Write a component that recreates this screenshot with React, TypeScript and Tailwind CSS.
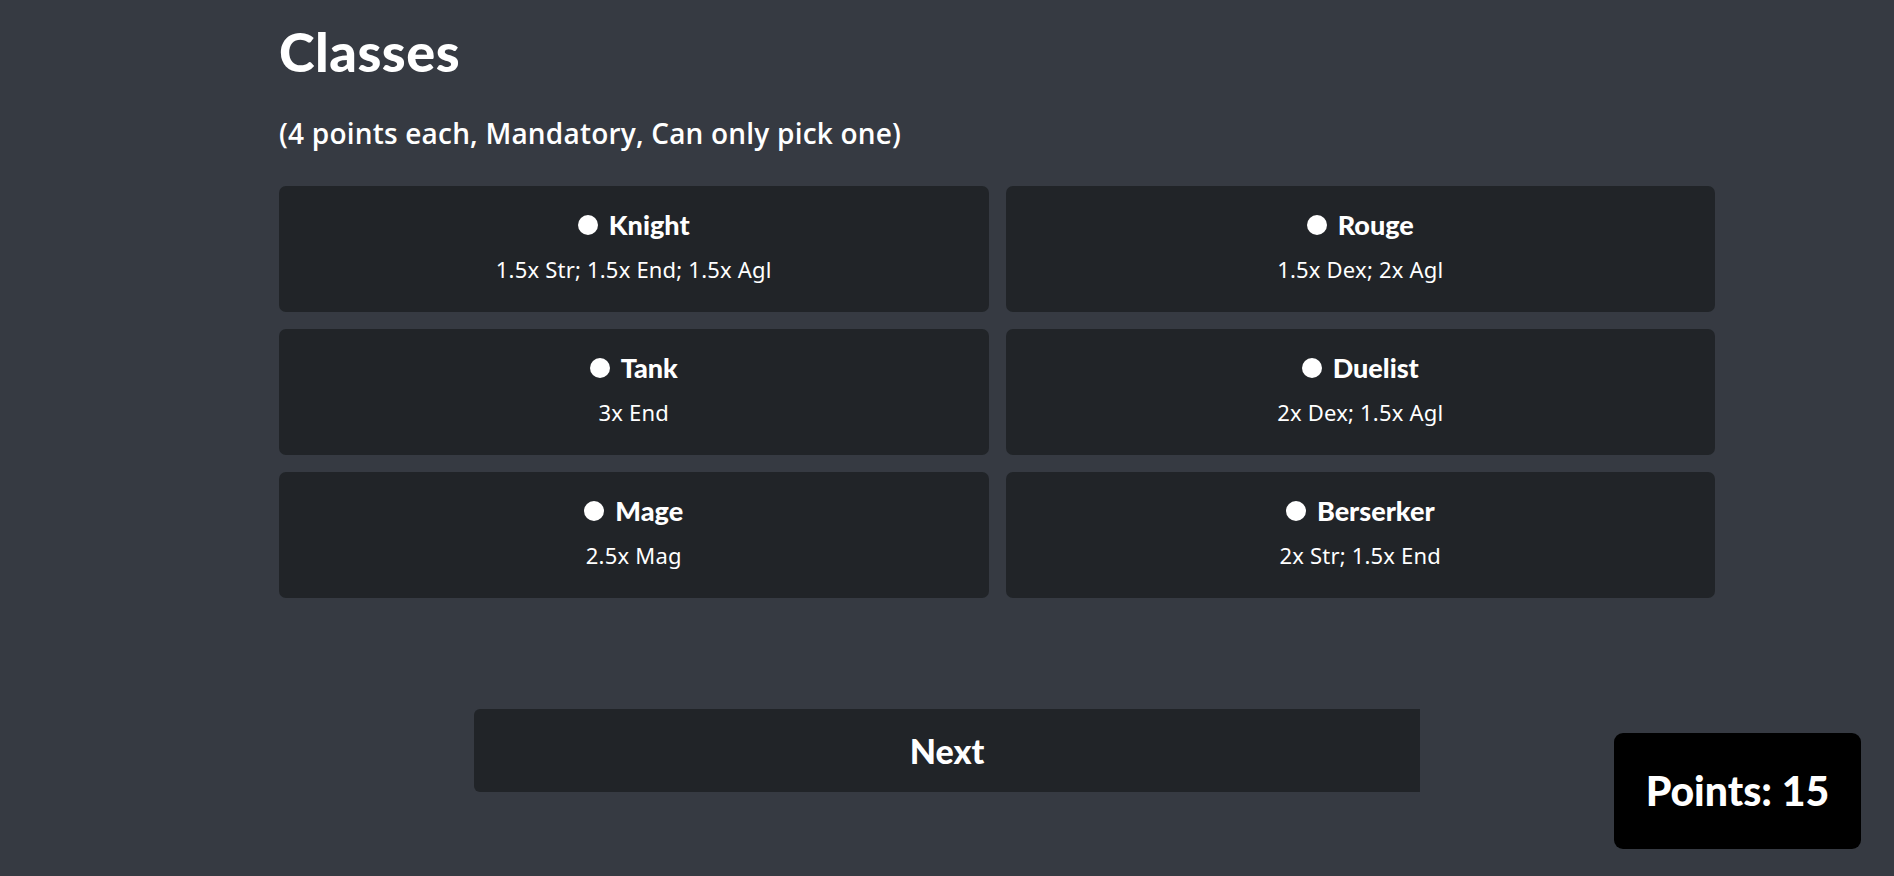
import React from "react";

const classes = [
  { name: "Knight", desc: "1.5x Str; 1.5x End; 1.5x Agl" },
  { name: "Rouge", desc: "1.5x Dex; 2x Agl" },
  { name: "Tank", desc: "3x End" },
  { name: "Duelist", desc: "2x Dex; 1.5x Agl" },
  { name: "Mage", desc: "2.5x Mag" },
  { name: "Berserker", desc: "2x Str; 1.5x End" },
];

export default function App() {
  return (
    <div className="min-h-[876px] w-full bg-[#363a42] text-white relative overflow-hidden" style={{ fontFamily: "'Noto Sans', sans-serif" }}>
      <div className="ml-[279px] w-[1436px] pt-[22px]">
        <h1 className="text-[54px] leading-[60px] font-black tracking-[0.5px]" style={{ fontFamily: "Lato, sans-serif" }}>Classes</h1>
        <p className="mt-[32px] text-[28px] leading-[38px] font-semibold tracking-[0.2px]" style={{ fontFamily: "'Open Sans', sans-serif" }}>
          (4 points each, Mandatory, Can only pick one)
        </p>
        <div className="mt-[34px] grid grid-cols-2 gap-x-[17px] gap-y-[17px]">
          {classes.map((c) => (
            <label key={c.name} className="h-[126px] pb-[6px] rounded-[7px] bg-[#212428] flex flex-col items-center justify-center">
              <div className="flex items-center gap-[11px]">
                <span className="w-[20px] h-[20px] rounded-full bg-white inline-block"></span>
                <span className="text-[27px] leading-[32px] font-black" style={{ fontFamily: "Lato, sans-serif" }}>{c.name}</span>
              </div>
              <div className="mt-[14px] text-[22px] leading-[28px] tracking-[0.2px]">{c.desc}</div>
            </label>
          ))}
        </div>
      </div>
      <div className="flex justify-center mt-[111px]">
        <button className="w-[946px] h-[83px] bg-[#212428] rounded-l-[6px] text-[34px] font-black text-white" style={{ fontFamily: "Lato, sans-serif" }}>
          Next
        </button>
      </div>
      <div className="absolute right-[33px] bottom-[27px] w-[247px] h-[116px] bg-black rounded-[9px] flex items-center justify-center">
        <span className="text-[41px] font-black" style={{ fontFamily: "Lato, sans-serif" }}>Points: 15</span>
      </div>
    </div>
  );
}
